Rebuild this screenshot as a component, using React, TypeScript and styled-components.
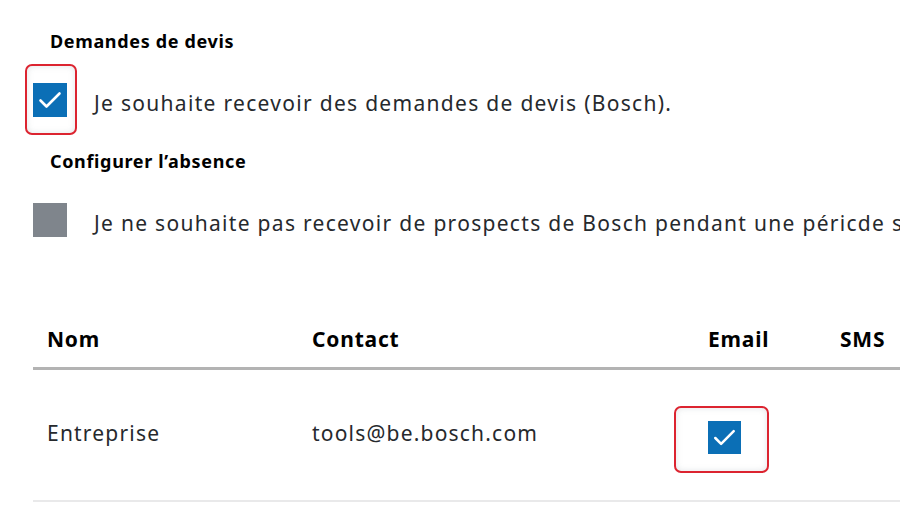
import React from 'react'
import styled, { createGlobalStyle } from 'styled-components'

const GlobalStyle = createGlobalStyle`
  html, body {
    margin: 0;
    padding: 0;
    background: #ffffff;
    overflow: hidden;
  }

  body {
    font-family: 'Noto Sans', 'Liberation Sans', sans-serif;
    color: #1d2024;
    -webkit-font-smoothing: antialiased;
  }
`

const Page = styled.div`
  width: 900px;
  height: 507px;
  overflow: hidden;
  padding: 29px 0 0 33px;
  box-sizing: border-box;
`

const SectionTitle = styled.h3<{ $gap?: number }>`
  margin: ${p => p.$gap ?? 0}px 0 0 17px;
  height: 24px;
  line-height: 24px;
  font-size: 18px;
  font-weight: 700;
  letter-spacing: 0.65px;
  color: #000;
  white-space: nowrap;
`

const OptionRow = styled.label<{ $gap: number }>`
  display: flex;
  align-items: center;
  gap: 27px;
  height: 60px;
  margin-top: ${p => p.$gap}px;
  white-space: nowrap;
`

const OptionText = styled.span`
  font-size: 21px;
  letter-spacing: 1.3px;
  padding-top: 5px;
  color: #26292d;
`

const BoxWrap = styled.span`
  position: relative;
  display: inline-flex;
  flex: none;
`

const Box = styled.span<{ $checked?: boolean; $size?: number }>`
  width: ${p => p.$size ?? 34}px;
  height: ${p => p.$size ?? 34}px;
  display: inline-flex;
  background: ${p => (p.$checked ? '#0b6fb6' : '#7f858c')};

  svg {
    width: 100%;
    height: 100%;
  }
`

// red callout ring drawn over a checkbox
const Callout = styled.span<{ $l: number; $t: number; $r: number; $b: number }>`
  position: absolute;
  left: -${p => p.$l}px;
  top: -${p => p.$t}px;
  right: -${p => p.$r}px;
  bottom: -${p => p.$b}px;
  border: 2px solid #dc2430;
  border-radius: 7px;
  box-shadow: inset 0 0 6px rgba(120, 130, 140, 0.22);
  pointer-events: none;
`

const Table = styled.div`
  margin-top: 60px;
  width: 900px;
`

const Row = styled.div<{ $head?: boolean }>`
  display: grid;
  grid-template-columns: 265px 396px 132px 140px;
  align-items: center;
  height: ${p => (p.$head ? 57 : 130)}px;
  border-bottom: ${p => (p.$head ? '3px solid #b3b3b3' : '2px solid #e9e9ea')};
`

const Cell = styled.div<{ $head?: boolean }>`
  padding-left: 14px;
  font-size: 21px;
  font-weight: ${p => (p.$head ? 700 : 400)};
  color: ${p => (p.$head ? '#000' : '#26292d')};
  letter-spacing: ${p => (p.$head ? 0.8 : 1.2)}px;
  white-space: nowrap;
  padding-bottom: ${p => (p.$head ? 0 : 4)}px;
`

const CheckCell = styled.div`
  padding-left: 14px;
  display: flex;
  padding-top: 5px;
`

const Tick = () => (
  <svg viewBox="0 0 34 34" fill="none">
    <path d="M7.5 17.5 L13.5 23.5 L26.5 10.5" stroke="#fff" strokeWidth="2.6" strokeLinecap="round" strokeLinejoin="round" />
  </svg>
)

type CheckProps = { checked?: boolean; size?: number; callout?: [number, number, number, number] }

const Checkbox = ({ checked, size, callout }: CheckProps) => (
  <BoxWrap>
    <Box $checked={checked} $size={size}>{checked && <Tick />}</Box>
    {callout && <Callout $l={callout[0]} $t={callout[1]} $r={callout[2]} $b={callout[3]} />}
  </BoxWrap>
)

export default function App() {
  return (
    <>
      <GlobalStyle />
      <Page>
        <SectionTitle>Demandes de devis</SectionTitle>
        <OptionRow $gap={17}>
          <Checkbox checked callout={[8, 19, 10, 18]} />
          <OptionText>Je souhaite recevoir des demandes de devis (Bosch).</OptionText>
        </OptionRow>

        <SectionTitle $gap={19}>Configurer l’absence</SectionTitle>
        <OptionRow $gap={17}>
          <Checkbox />
          <OptionText>Je ne souhaite pas recevoir de prospects de Bosch pendant une péricde spécifique.</OptionText>
        </OptionRow>

        <Table>
          <Row $head>
            <Cell $head>Nom</Cell>
            <Cell $head>Contact</Cell>
            <Cell $head>Email</Cell>
            <Cell $head>SMS</Cell>
          </Row>
          <Row>
            <Cell>Entreprise</Cell>
            <Cell>tools@be.bosch.com</Cell>
            <CheckCell>
              <Checkbox checked size={33} callout={[34, 15, 28, 19]} />
            </CheckCell>
            <Cell />
          </Row>
        </Table>
      </Page>
    </>
  )
}
